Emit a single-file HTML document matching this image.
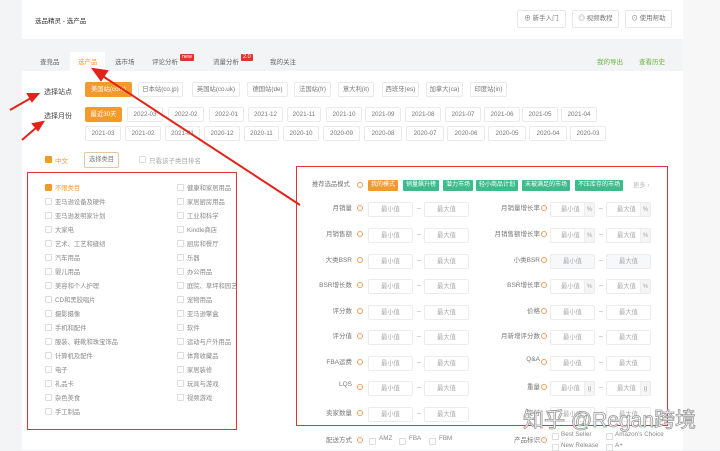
<!DOCTYPE html>
<html><head><meta charset="utf-8">
<style>
*{margin:0;padding:0;box-sizing:border-box}
body{width:720px;height:450px;overflow:hidden;background:#f3f4f6;font-family:"Liberation Sans","Noto Sans CJK SC",sans-serif;font-size:7px;color:#555;position:relative}
.a{position:absolute;white-space:nowrap}
.hdr{left:22px;top:0;width:661px;height:39px;background:#fff}
.main{left:22px;top:71px;width:661px;height:379px;background:#fff}
.rs{left:683px;top:0;width:37px;height:450px;background:#f7f7f8}
.hb{height:18px;border:1px solid #e8e8e8;border-radius:2px;background:#fff;line-height:16px;text-align:center;color:#777;font-size:6.5px}
.b{height:15px;border:1px solid #eaeaea;border-radius:2px;line-height:13px;text-align:center;color:#777;font-size:6.3px;background:#fff}
.o{background:#f39a2d;border-color:#f39a2d;color:#fff}
.cb{width:7px;height:7px;border:1px solid #ddd;border-radius:1px;background:#fff}
.cbo{background:#f39a2d;border-color:#f39a2d}
.red{border:1.5px solid #d9363a}
.in{height:15px;border:1px solid #ececec;border-radius:2px;line-height:13px;text-align:center;color:#aaa;font-size:6.3px;background:#fff}
.q{width:6px;height:6px;border:0.8px solid #f0a060;border-radius:50%;transform:translateY(-1px)}
.lb{text-align:right;color:#777;font-size:6.5px;transform:translateY(-3px)}
.tag{height:11px;line-height:11px;padding:0 3px;color:#fff;font-size:6px;border-radius:1px;background:#3dbb8a}
</style></head><body>
<div class="a rs"></div>
<div class="a hdr"></div>
<div class="a" style="left:35px;top:15px;font-size:6.5px;color:#333">选品精灵 - 选产品</div>
<div class="a hb" style="left:517px;top:10px;width:49px">⊕ 新手入门</div>
<div class="a hb" style="left:572px;top:10px;width:47px">◎ 视频教程</div>
<div class="a hb" style="left:625px;top:10px;width:47px">⊙ 使用帮助</div>
<!-- tabs -->
<div class="a" style="left:70px;top:52px;width:35px;height:19px;background:#fff"></div>
<div class="a" style="left:40px;top:56px;font-size:6.5px;color:#666">查竞品</div>
<div class="a" style="left:78px;top:56px;font-size:6.5px;color:#f39a2d">选产品</div>
<div class="a" style="left:115px;top:56px;font-size:6.5px;color:#666">选市场</div>
<div class="a" style="left:152px;top:56px;font-size:6.5px;color:#666">评论分析</div>
<div class="a" style="left:180px;top:54px;background:#e0352b;color:#fff;font-size:5.5px;padding:0 2px;border-radius:1px;line-height:7px">new</div>
<div class="a" style="left:213px;top:56px;font-size:6.5px;color:#666">流量分析</div>
<div class="a" style="left:241px;top:54px;background:#e0352b;color:#fff;font-size:5.5px;padding:0 2px;border-radius:1px;line-height:7px">2.0</div>
<div class="a" style="left:270px;top:56px;font-size:6.5px;color:#666">我的关注</div>
<div class="a" style="left:597px;top:56px;font-size:6.5px;color:#6cb33e">我的导出</div>
<div class="a" style="left:639px;top:56px;font-size:6.5px;color:#6cb33e">查看历史</div>
<div class="a main"></div>
<!-- site -->
<div class="a" style="left:44px;top:87px;font-size:7px;color:#444">选择站点</div>
<div class="a b o" style="left:85px;top:82px;width:47px">美国站(com)</div>
<div class="a b" style="left:138px;top:82px;width:45px">日本站(co.jp)</div>
<div class="a b" style="left:192px;top:82px;width:48px">英国站(co.uk)</div>
<div class="a b" style="left:247px;top:82px;width:41px">德国站(de)</div>
<div class="a b" style="left:294px;top:82px;width:37px">法国站(fr)</div>
<div class="a b" style="left:338px;top:82px;width:36px">意大利(it)</div>
<div class="a b" style="left:382px;top:82px;width:37px">西班牙(es)</div>
<div class="a b" style="left:426px;top:82px;width:37px">加拿大(ca)</div>
<div class="a b" style="left:470px;top:82px;width:37px">印度站(in)</div>
<!-- months -->
<div class="a" style="left:44px;top:111px;font-size:7px;color:#444">选择月份</div>
<div class="a b o" style="left:85px;top:107px;width:37px">最近30天</div>
<div class="a b" style="left:127px;top:107px;width:36px">2022-03</div>
<div class="a b" style="left:168px;top:107px;width:36px">2022-02</div>
<div class="a b" style="left:209px;top:107px;width:35px">2022-01</div>
<div class="a b" style="left:248px;top:107px;width:35px">2021-12</div>
<div class="a b" style="left:287px;top:107px;width:34px">2021-11</div>
<div class="a b" style="left:326px;top:107px;width:36px">2021-10</div>
<div class="a b" style="left:365px;top:107px;width:36px">2021-09</div>
<div class="a b" style="left:405px;top:107px;width:36px">2021-08</div>
<div class="a b" style="left:445px;top:107px;width:36px">2021-07</div>
<div class="a b" style="left:484px;top:107px;width:36px">2021-06</div>
<div class="a b" style="left:522px;top:107px;width:36px">2021-05</div>
<div class="a b" style="left:561px;top:107px;width:36px">2021-04</div>
<div class="a b" style="left:85px;top:126px;width:36px">2021-03</div>
<div class="a b" style="left:125px;top:126px;width:36px">2021-02</div>
<div class="a b" style="left:165px;top:126px;width:35px">2021-01</div>
<div class="a b" style="left:204px;top:126px;width:36px">2020-12</div>
<div class="a b" style="left:244px;top:126px;width:35px">2020-11</div>
<div class="a b" style="left:283px;top:126px;width:36px">2020-10</div>
<div class="a b" style="left:323px;top:126px;width:37px">2020-09</div>
<div class="a b" style="left:364px;top:126px;width:38px">2020-08</div>
<div class="a b" style="left:406px;top:126px;width:38px">2020-07</div>
<div class="a b" style="left:447px;top:126px;width:38px">2020-06</div>
<div class="a b" style="left:488px;top:126px;width:38px">2020-05</div>
<div class="a b" style="left:529px;top:126px;width:38px">2020-04</div>
<div class="a b" style="left:570px;top:126px;width:36px">2020-03</div>
<!-- options row -->
<div class="a cb cbo" style="left:45px;top:156px"></div>
<div class="a" style="left:55px;top:155px;color:#f39a2d;font-size:6.5px">中文</div>
<div class="a b" style="left:84px;top:152px;width:35px;height:16px;border-color:#e7c79c;line-height:14px">选择类目</div>
<div class="a cb" style="left:139px;top:156px"></div>
<div class="a" style="left:149px;top:155px;color:#aaa;font-size:6.5px">只看该子类目排名</div>
<!-- left box -->
<div class="a red" style="left:27px;top:172px;width:210px;height:258px"></div>
<div class="a" style="left:45px;top:182px;line-height:14px;font-size:6.3px;color:#888">
<div><span class="cb cbo" style="display:inline-block;vertical-align:-1px;margin-right:3px"></span><span style="color:#f39a2d">不限类目</span></div>
<div><span class="cb" style="display:inline-block;vertical-align:-1px;margin-right:3px"></span>亚马逊设备及硬件</div>
<div><span class="cb" style="display:inline-block;vertical-align:-1px;margin-right:3px"></span>亚马逊发明家计划</div>
<div><span class="cb" style="display:inline-block;vertical-align:-1px;margin-right:3px"></span>大家电</div>
<div><span class="cb" style="display:inline-block;vertical-align:-1px;margin-right:3px"></span>艺术、工艺和缝纫</div>
<div><span class="cb" style="display:inline-block;vertical-align:-1px;margin-right:3px"></span>汽车用品</div>
<div><span class="cb" style="display:inline-block;vertical-align:-1px;margin-right:3px"></span>婴儿用品</div>
<div><span class="cb" style="display:inline-block;vertical-align:-1px;margin-right:3px"></span>美容和个人护理</div>
<div><span class="cb" style="display:inline-block;vertical-align:-1px;margin-right:3px"></span>CD和黑胶唱片</div>
<div><span class="cb" style="display:inline-block;vertical-align:-1px;margin-right:3px"></span>摄影摄像</div>
<div><span class="cb" style="display:inline-block;vertical-align:-1px;margin-right:3px"></span>手机和配件</div>
<div><span class="cb" style="display:inline-block;vertical-align:-1px;margin-right:3px"></span>服装、鞋靴和珠宝饰品</div>
<div><span class="cb" style="display:inline-block;vertical-align:-1px;margin-right:3px"></span>计算机及配件</div>
<div><span class="cb" style="display:inline-block;vertical-align:-1px;margin-right:3px"></span>电子</div>
<div><span class="cb" style="display:inline-block;vertical-align:-1px;margin-right:3px"></span>礼品卡</div>
<div><span class="cb" style="display:inline-block;vertical-align:-1px;margin-right:3px"></span>杂色美食</div>
<div><span class="cb" style="display:inline-block;vertical-align:-1px;margin-right:3px"></span>手工制品</div>
</div>
<div class="a" style="left:177px;top:182px;line-height:14px;font-size:6.3px;color:#888">
<div><span class="cb" style="display:inline-block;vertical-align:-1px;margin-right:3px"></span>健康和家居用品</div>
<div><span class="cb" style="display:inline-block;vertical-align:-1px;margin-right:3px"></span>家居厨房用品</div>
<div><span class="cb" style="display:inline-block;vertical-align:-1px;margin-right:3px"></span>工业和科学</div>
<div><span class="cb" style="display:inline-block;vertical-align:-1px;margin-right:3px"></span>Kindle商店</div>
<div><span class="cb" style="display:inline-block;vertical-align:-1px;margin-right:3px"></span>厨房和餐厅</div>
<div><span class="cb" style="display:inline-block;vertical-align:-1px;margin-right:3px"></span>乐器</div>
<div><span class="cb" style="display:inline-block;vertical-align:-1px;margin-right:3px"></span>办公用品</div>
<div><span class="cb" style="display:inline-block;vertical-align:-1px;margin-right:3px"></span>庭院、草坪和园艺</div>
<div><span class="cb" style="display:inline-block;vertical-align:-1px;margin-right:3px"></span>宠物用品</div>
<div><span class="cb" style="display:inline-block;vertical-align:-1px;margin-right:3px"></span>亚马逊擎盒</div>
<div><span class="cb" style="display:inline-block;vertical-align:-1px;margin-right:3px"></span>软件</div>
<div><span class="cb" style="display:inline-block;vertical-align:-1px;margin-right:3px"></span>运动与户外用品</div>
<div><span class="cb" style="display:inline-block;vertical-align:-1px;margin-right:3px"></span>体育收藏品</div>
<div><span class="cb" style="display:inline-block;vertical-align:-1px;margin-right:3px"></span>家居装修</div>
<div><span class="cb" style="display:inline-block;vertical-align:-1px;margin-right:3px"></span>玩具与游戏</div>
<div><span class="cb" style="display:inline-block;vertical-align:-1px;margin-right:3px"></span>视频游戏</div>
</div>
<!-- right box -->
<div class="a red" style="left:296px;top:166px;width:372px;height:260px"></div>
<div class="a" style="left:312px;top:179px;font-size:6.3px;color:#777">推荐选品模式</div>
<div class="a q" style="left:357px;top:183px"></div>
<div class="a tag" style="left:368px;top:180px;background:#f39a2d">我的模式</div>
<div class="a tag" style="left:403px;top:180px">销量飙升榜</div>
<div class="a tag" style="left:443px;top:180px">潜力市场</div>
<div class="a tag" style="left:476px;top:180px">轻小商品计划</div>
<div class="a tag" style="left:522px;top:180px">未被满足的市场</div>
<div class="a tag" style="left:575px;top:180px">不压库存的市场</div>
<div class="a" style="left:633px;top:180px;color:#bbb;font-size:6.3px">更多 ›</div>

<div class="a lb" style="left:300px;top:205px;width:52px">月销量</div><div class="a q" style="left:357px;top:206px"></div>
<div class="a in" style="left:368px;top:202px;width:45px">最小值</div><div class="a" style="left:417px;top:205px;color:#aaa">–</div><div class="a in" style="left:424px;top:202px;width:45px">最大值</div>
<div class="a lb" style="left:480px;top:205px;width:60px">月销量增长率</div><div class="a q" style="left:541px;top:206px"></div>
<div class="a in" style="left:550px;top:202px;width:45px;text-align:left;padding-left:10px">最小值<span style="position:absolute;right:0;top:0;width:10px;height:13px;background:#f5f5f5;border-left:1px solid #eee;text-align:center">%</span></div><div class="a" style="left:599px;top:205px;color:#aaa">–</div><div class="a in" style="left:606px;top:202px;width:45px;text-align:left;padding-left:10px">最大值<span style="position:absolute;right:0;top:0;width:10px;height:13px;background:#f5f5f5;border-left:1px solid #eee;text-align:center">%</span></div>

<div class="a lb" style="left:300px;top:231px;width:52px">月销售额</div><div class="a q" style="left:357px;top:232px"></div>
<div class="a in" style="left:368px;top:228px;width:45px">最小值</div><div class="a" style="left:417px;top:231px;color:#aaa">–</div><div class="a in" style="left:424px;top:228px;width:45px">最大值</div>
<div class="a lb" style="left:480px;top:231px;width:60px">月销售额增长率</div><div class="a q" style="left:541px;top:232px"></div>
<div class="a in" style="left:550px;top:228px;width:45px;text-align:left;padding-left:10px">最小值<span style="position:absolute;right:0;top:0;width:10px;height:13px;background:#f5f5f5;border-left:1px solid #eee;text-align:center">%</span></div><div class="a" style="left:599px;top:231px;color:#aaa">–</div><div class="a in" style="left:606px;top:228px;width:45px;text-align:left;padding-left:10px">最大值<span style="position:absolute;right:0;top:0;width:10px;height:13px;background:#f5f5f5;border-left:1px solid #eee;text-align:center">%</span></div>

<div class="a lb" style="left:300px;top:257px;width:52px">大类BSR</div><div class="a q" style="left:357px;top:258px"></div>
<div class="a in" style="left:368px;top:254px;width:45px">最小值</div><div class="a" style="left:417px;top:257px;color:#aaa">–</div><div class="a in" style="left:424px;top:254px;width:45px">最大值</div>
<div class="a lb" style="left:480px;top:257px;width:60px">小类BSR</div><div class="a q" style="left:541px;top:258px"></div>
<div class="a in" style="left:550px;top:254px;width:45px;background:#f7f8fa">最小值</div><div class="a" style="left:599px;top:257px;color:#aaa">–</div><div class="a in" style="left:606px;top:254px;width:45px;background:#f7f8fa">最大值</div>

<div class="a lb" style="left:300px;top:282px;width:52px">BSR增长数</div><div class="a q" style="left:357px;top:283px"></div>
<div class="a in" style="left:368px;top:279px;width:45px">最小值</div><div class="a" style="left:417px;top:282px;color:#aaa">–</div><div class="a in" style="left:424px;top:279px;width:45px">最大值</div>
<div class="a lb" style="left:480px;top:282px;width:60px">BSR增长率</div><div class="a q" style="left:541px;top:283px"></div>
<div class="a in" style="left:550px;top:279px;width:45px;text-align:left;padding-left:10px">最小值<span style="position:absolute;right:0;top:0;width:10px;height:13px;background:#f5f5f5;border-left:1px solid #eee;text-align:center">%</span></div><div class="a" style="left:599px;top:282px;color:#aaa">–</div><div class="a in" style="left:606px;top:279px;width:45px;text-align:left;padding-left:10px">最大值<span style="position:absolute;right:0;top:0;width:10px;height:13px;background:#f5f5f5;border-left:1px solid #eee;text-align:center">%</span></div>

<div class="a lb" style="left:300px;top:308px;width:52px">评分数</div><div class="a q" style="left:357px;top:309px"></div>
<div class="a in" style="left:368px;top:305px;width:45px">最小值</div><div class="a" style="left:417px;top:308px;color:#aaa">–</div><div class="a in" style="left:424px;top:305px;width:45px">最大值</div>
<div class="a lb" style="left:480px;top:308px;width:60px">价格</div><div class="a q" style="left:541px;top:309px"></div>
<div class="a in" style="left:550px;top:305px;width:45px">最小值</div><div class="a" style="left:599px;top:308px;color:#aaa">–</div><div class="a in" style="left:606px;top:305px;width:45px">最大值</div>

<div class="a lb" style="left:300px;top:333px;width:52px">评分值</div><div class="a q" style="left:357px;top:334px"></div>
<div class="a in" style="left:368px;top:330px;width:45px">最小值</div><div class="a" style="left:417px;top:333px;color:#aaa">–</div><div class="a in" style="left:424px;top:330px;width:45px">最大值</div>
<div class="a lb" style="left:480px;top:333px;width:60px">月新增评分数</div><div class="a q" style="left:541px;top:334px"></div>
<div class="a in" style="left:550px;top:330px;width:45px">最小值</div><div class="a" style="left:599px;top:333px;color:#aaa">–</div><div class="a in" style="left:606px;top:330px;width:45px">最大值</div>

<div class="a lb" style="left:300px;top:359px;width:52px">FBA运费</div><div class="a q" style="left:357px;top:360px"></div>
<div class="a in" style="left:368px;top:356px;width:45px">最小值</div><div class="a" style="left:417px;top:359px;color:#aaa">–</div><div class="a in" style="left:424px;top:356px;width:45px">最大值</div>
<div class="a lb" style="left:480px;top:359px;width:60px">Q&amp;A</div><div class="a q" style="left:541px;top:360px"></div>
<div class="a in" style="left:550px;top:356px;width:45px">最小值</div><div class="a" style="left:599px;top:359px;color:#aaa">–</div><div class="a in" style="left:606px;top:356px;width:45px">最大值</div>

<div class="a lb" style="left:300px;top:384px;width:52px">LQS</div><div class="a q" style="left:357px;top:385px"></div>
<div class="a in" style="left:368px;top:381px;width:45px">最小值</div><div class="a" style="left:417px;top:384px;color:#aaa">–</div><div class="a in" style="left:424px;top:381px;width:45px">最大值</div>
<div class="a lb" style="left:480px;top:384px;width:60px">重量</div><div class="a q" style="left:541px;top:385px"></div>
<div class="a in" style="left:550px;top:381px;width:45px;text-align:left;padding-left:10px">最小值<span style="position:absolute;right:0;top:0;width:10px;height:13px;background:#f5f5f5;border-left:1px solid #eee;text-align:center">g</span></div><div class="a" style="left:599px;top:384px;color:#aaa">–</div><div class="a in" style="left:606px;top:381px;width:45px;text-align:left;padding-left:10px">最大值<span style="position:absolute;right:0;top:0;width:10px;height:13px;background:#f5f5f5;border-left:1px solid #eee;text-align:center">g</span></div>

<div class="a lb" style="left:300px;top:410px;width:52px">卖家数量</div><div class="a q" style="left:357px;top:411px"></div>
<div class="a in" style="left:368px;top:407px;width:45px">最小值</div><div class="a" style="left:417px;top:410px;color:#aaa">–</div><div class="a in" style="left:424px;top:407px;width:45px">最大值</div>
<div class="a lb" style="left:480px;top:410px;width:60px">交付</div>
<div class="a in" style="left:550px;top:407px;width:45px">最小值</div><div class="a in" style="left:606px;top:407px;width:45px">最大值</div>

<div class="a lb" style="left:300px;top:437px;width:52px">配送方式</div><div class="a q" style="left:357px;top:438px"></div>
<div class="a cb" style="left:369px;top:438px"></div><div class="a" style="left:379px;top:435px;color:#888;font-size:6.3px">AMZ</div>
<div class="a cb" style="left:399px;top:438px"></div><div class="a" style="left:409px;top:435px;color:#888;font-size:6.3px">FBA</div>
<div class="a cb" style="left:429px;top:438px"></div><div class="a" style="left:439px;top:435px;color:#888;font-size:6.3px">FBM</div>
<div class="a lb" style="left:480px;top:437px;width:60px">产品标识</div><div class="a q" style="left:541px;top:438px"></div>
<div class="a cb" style="left:552px;top:433px"></div><div class="a" style="left:561px;top:431px;color:#888;font-size:6.3px">Best Seller</div>
<div class="a cb" style="left:606px;top:433px"></div><div class="a" style="left:615px;top:431px;color:#888;font-size:6.3px">Amazon's Choice</div>
<div class="a cb" style="left:552px;top:444px"></div><div class="a" style="left:561px;top:442px;color:#888;font-size:6.3px">New Release</div>
<div class="a cb" style="left:606px;top:444px"></div><div class="a" style="left:615px;top:442px;color:#888;font-size:6.3px">A+</div>

<!-- watermark -->
<div class="a" style="left:523px;top:404px;font-size:21px;color:#fff;-webkit-text-stroke:0.8px #999">知乎 @Regan跨境</div>

<!-- arrows -->
<svg class="a" style="left:0;top:0" width="720" height="450">
<g stroke="#e2231a" stroke-width="2" fill="#e2231a">
<line x1="300" y1="205" x2="101" y2="75"/>
<polygon points="93,69 107,71 101,80"/>
<line x1="10" y1="110" x2="31" y2="98"/>
<polygon points="38,94 28,94 32,101"/>
<line x1="22" y1="140" x2="37" y2="127"/>
<polygon points="43,122 33,124 38,130"/>
</g></svg>
</body></html>
